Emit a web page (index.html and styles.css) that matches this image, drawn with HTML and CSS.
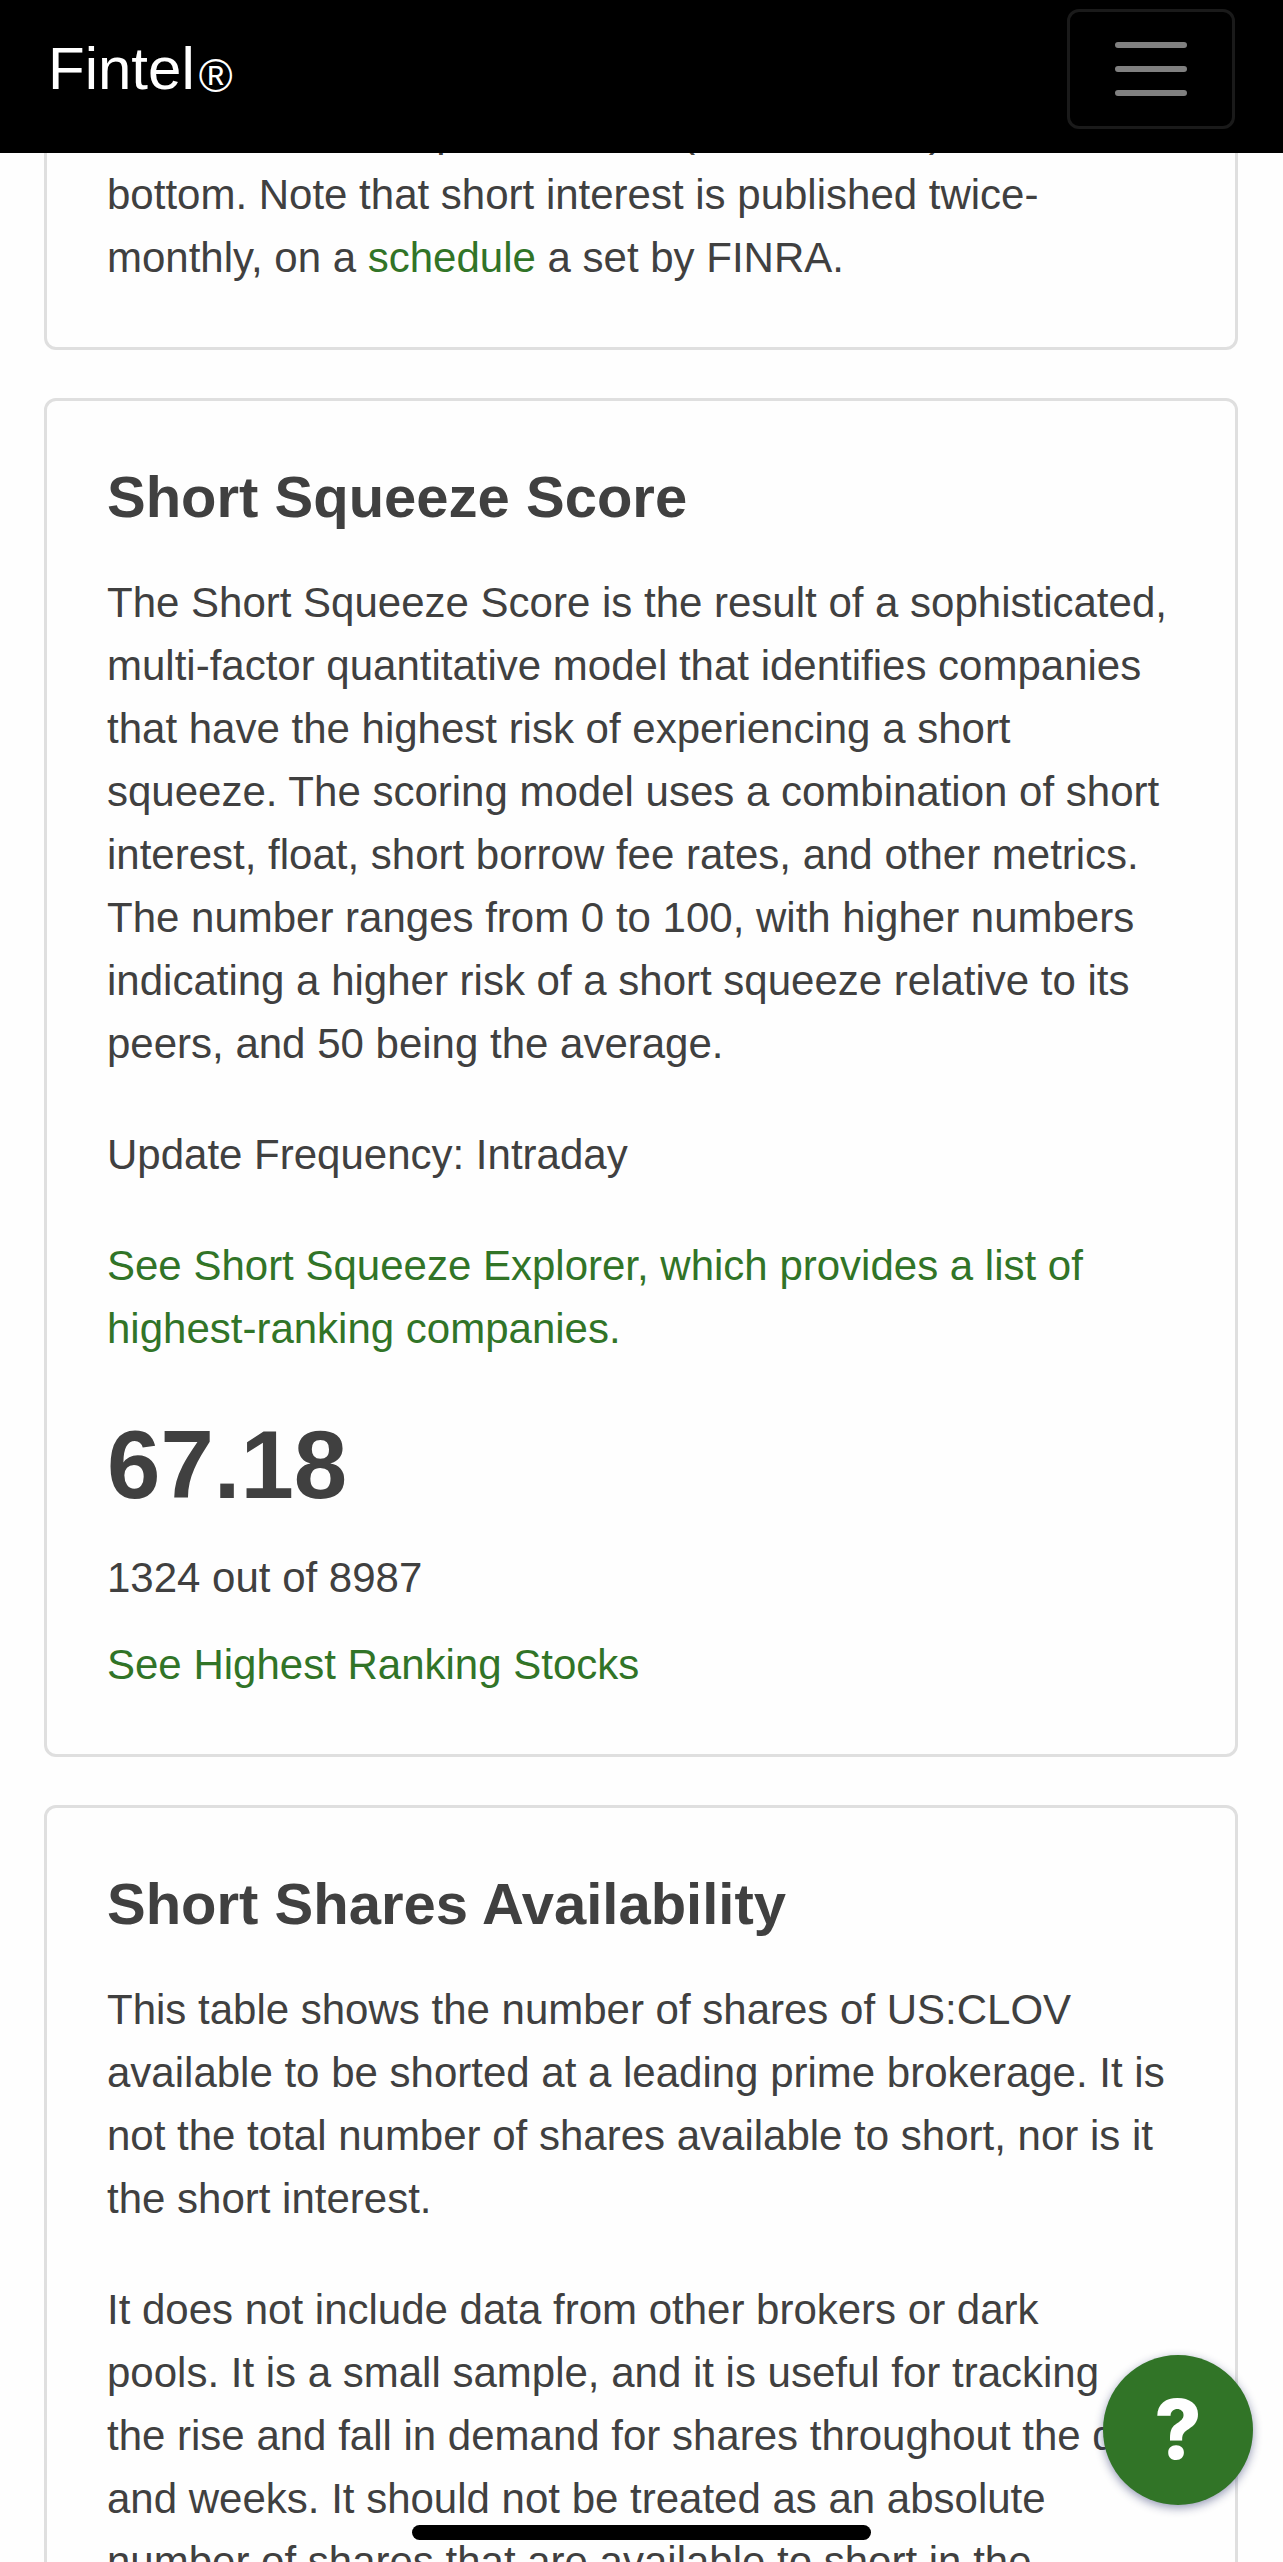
FILE: index.html
```html
<!DOCTYPE html>
<html lang="en">
<head>
  <meta charset="utf-8">
  <meta name="viewport" content="width=device-width, initial-scale=1">
  <title>Fintel - Short Squeeze Score</title>
  <link rel="stylesheet" href="styles.css">
</head>
<body>
  <header class="navbar">
    <a class="brand" href="#">Fintel<span class="registered">®</span></a>
    <button class="toggler" type="button" aria-label="Toggle navigation">
      <svg class="toggler-icon" viewBox="0 0 30 30" aria-hidden="true">
        <path d="M4 7h22M4 15h22M4 23h22" fill="none" stroke="currentColor" stroke-width="2" stroke-linecap="round"/>
      </svg>
    </button>
  </header>

  <main class="cards">
    <section class="card">
      <p>sorted from the top of the data (most current) to the bottom. Note that short interest is published twice-monthly, on a <a href="#">schedule</a> a set by FINRA.</p>
    </section>

    <section class="card">
      <h2>Short Squeeze Score</h2>
      <p>The Short Squeeze Score is the result of a sophisticated, multi-factor quantitative model that identifies companies that have the highest risk of experiencing a short squeeze. The scoring model uses a combination of short interest, float, short borrow fee rates, and other metrics. The number ranges from 0 to 100, with higher numbers indicating a higher risk of a short squeeze relative to its peers, and 50 being the average.</p>
      <p>Update Frequency: Intraday</p>
      <p><a href="#">See Short Squeeze Explorer, which provides a list of highest-ranking companies.</a></p>
      <div class="score">
        <strong class="score-value">67.18</strong>
        <span>1324 out of 8987</span>
        <a href="#">See Highest Ranking Stocks</a>
      </div>
    </section>

    <section class="card">
      <h2>Short Shares Availability</h2>
      <p>This table shows the number of shares of US:CLOV available to be shorted at a leading prime brokerage. It is not the total number of shares available to short, nor is it the short interest.</p>
      <p>It does not include data from other brokers or dark<br>pools. It is a small sample, and it is useful for tracking<br>the rise and fall in demand for shares throughout the day<br>and weeks. It should not be treated as an absolute<br>number of shares that are available to short in the market.</p>
    </section>
  </main>

  <button class="help" type="button" aria-label="Help">?</button>
  <div class="home-indicator"></div>
</body>
</html>
```

FILE: styles.css
```css
*,
*::before,
*::after {
  box-sizing: border-box;
}

html {
  height: 100%;
  overflow: hidden;
}

body {
  height: 100%;
  margin: 0;
  overflow: hidden;
  background: #fefefe;
  color: #404040;
  font: 42px/63px "Liberation Sans", Arial, Helvetica, sans-serif;
}

a {
  color: #317427;
  text-decoration: none;
}

/* Top bar */
.navbar {
  position: fixed;
  top: 0;
  left: 0;
  right: 0;
  z-index: 2;
  display: flex;
  align-items: center;
  justify-content: space-between;
  padding: 9px 48px 24px;
  background: #000;
}

.brand {
  color: #fff;
  font-size: 60px;
  line-height: 72px;
}

.registered {
  margin-left: 4px;
  font-size: 46px;
  line-height: 0;
  vertical-align: -3px;
}

.toggler {
  display: flex;
  padding: 12px 36px;
  border: 3px solid #1a1a1a;
  border-radius: 12px;
  background: transparent;
  color: #808080;
}

.toggler-icon {
  width: 90px;
  height: 90px;
}

/* Content cards */
.cards {
  display: flex;
  flex-direction: column;
  gap: 48px;
  padding: 37px 45px 48px 44px;
}

.card {
  display: flex;
  flex-direction: column;
  gap: 48px;
  padding: 60px 60px 58px;
  border: 3px solid #dfdfdf;
  border-radius: 12px;
  background: #fefefe;
}

.card h2,
.card p {
  margin: 0;
}

.card h2 {
  margin-bottom: -10px;
  font-size: 58px;
  font-weight: 700;
  line-height: 72px;
}

.score {
  display: flex;
  flex-direction: column;
  align-items: flex-start;
  gap: 24px;
}

.score-value {
  font-size: 96px;
  line-height: 114px;
}

/* Floating controls */
.help {
  position: fixed;
  right: 30px;
  bottom: 57px;
  z-index: 1;
  width: 150px;
  height: 150px;
  padding: 0;
  border: 0;
  border-radius: 50%;
  background: #317427;
  box-shadow: 0 3px 10px rgba(20, 30, 90, 0.45);
  color: #fff;
  font: 800 82px/150px Inter, "Liberation Sans", sans-serif;
}

.home-indicator {
  position: fixed;
  bottom: 22px;
  left: 50%;
  z-index: 2;
  width: 459px;
  height: 15px;
  margin-left: -230px;
  border-radius: 8px;
  background: #000;
}
```
